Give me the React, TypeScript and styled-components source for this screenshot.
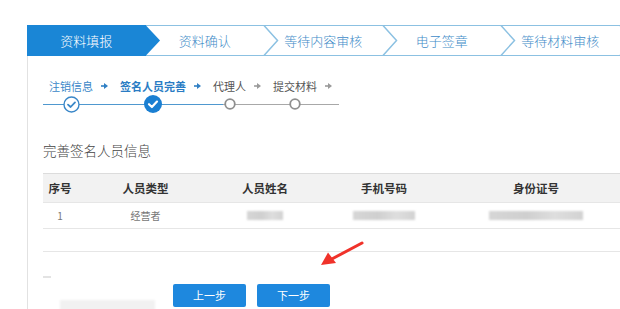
import React from "react";
import styled, { createGlobalStyle } from "styled-components";

const Global = createGlobalStyle`
  html, body { margin: 0; padding: 0; background: #fff; overflow: hidden; }
  body { font-family: "Microsoft YaHei", "Noto Sans CJK SC", "Noto Sans", sans-serif; }
  #root { width: 620px; height: 309px; position: relative; overflow: hidden; }
`;

const Page = styled.div`
  width: 620px;
  height: 309px;
  padding: 25px 0 0 27px;
  box-sizing: border-box;
  position: relative;
`;

const Panel = styled.div`
  border-left: 1px solid #e2e2e2;
  height: 100%;
  display: flex;
  flex-direction: column;
`;

const StepBar = styled.div`
  display: flex;
  height: 31px;
  margin-left: -1px;
`;

const Step = styled.div<{ $active?: boolean }>`
  position: relative;
  flex: 0 0 118.5px;
  height: 31px;
  box-sizing: border-box;
  display: flex;
  align-items: center;
  justify-content: center;
  font-size: 13px;
  font-weight: 300;
  color: ${(p) => (p.$active ? "#ffffff" : "#3f8cc8")};
  background: ${(p) => (p.$active ? "#1a86d6" : "#ffffff")};
  border-top: 1.5px solid ${(p) => (p.$active ? "#1a86d6" : "#8cc1e2")};
  border-bottom: 1.5px solid ${(p) => (p.$active ? "#1a86d6" : "#8cc1e2")};
`;

const ChevronSvg = styled.svg`
  position: absolute;
  left: 100%;
  top: -1.5px;
  width: 14px;
  height: 31px;
  z-index: 2;
  overflow: visible;
`;

const Content = styled.div`
  padding-left: 15px;
  display: flex;
  flex-direction: column;
`;

const SubSteps = styled.div`
  position: relative;
  display: flex;
  align-items: flex-start;
  margin-top: 23px;
  padding-left: 6px;
  &::before {
    content: "";
    position: absolute;
    left: 0;
    top: 24.5px;
    width: 296px;
    height: 1.5px;
    background: linear-gradient(to right, #4f98cf 0, #4f98cf 180px, #a8a8a8 180px, #a8a8a8 100%);
  }
`;

const SubStep = styled.div`
  display: flex;
  flex-direction: column;
  align-items: center;
  position: relative;
  z-index: 1;
`;

const SubLabel = styled.div<{ $tone: "done" | "current" | "todo" }>`
  font-size: 11px;
  line-height: 14px;
  height: 14px;
  white-space: nowrap;
  font-weight: ${(p) => (p.$tone === "current" ? 700 : 400)};
  color: ${(p) =>
    p.$tone === "done" ? "#3a87c8" : p.$tone === "current" ? "#2a7cc4" : "#555555"};
`;

const Node = styled.div`
  height: 18px;
  margin-top: 2px;
  display: flex;
  align-items: center;
  justify-content: center;
`;

const ArrowBox = styled.div`
  height: 14px;
  display: flex;
  align-items: center;
  margin: 0 12px 0 8px;
`;

const Title = styled.div`
  margin-top: 28px;
  font-size: 13.5px;
  font-weight: 300;
  line-height: 18px;
  color: #444;
`;

const Table = styled.div`
  margin-top: 14px;
  width: 577px;
  border-top: 1.5px solid #dcdcdc;
`;

const Row = styled.div<{ $head?: boolean; $h: number }>`
  display: grid;
  grid-template-columns: 34px 137px 102px 136px 168px;
  height: ${(p) => p.$h}px;
  align-items: center;
  background: ${(p) => (p.$head ? "#f2f2f2" : "#ffffff")};
  border-bottom: 1.5px solid #e6e6e6;
  box-sizing: border-box;
`;

const Cell = styled.div<{ $head?: boolean }>`
  text-align: center;
  font-size: ${(p) => (p.$head ? "11.5px" : "10px")};
  font-weight: ${(p) => (p.$head ? 700 : 400)};
  color: ${(p) => (p.$head ? "#333" : "#777")};
  display: flex;
  justify-content: center;
  white-space: nowrap;
`;

const Blur = styled.div<{ $w: number }>`
  width: ${(p) => p.$w}px;
  height: 9px;
  background: linear-gradient(to right, #d6d6d6, #cfcfcf 40%, #dedede 70%, #d2d2d2);
  filter: blur(0.8px);
`;

const Tick = styled.div`
  width: 8px;
  height: 1.5px;
  background: #e3e3e3;
  margin-top: 24px;
`;

const Buttons = styled.div`
  display: flex;
  gap: 11px;
  margin-top: 6px;
  margin-left: 130px;
`;

const Button = styled.button`
  width: 73px;
  height: 23px;
  border: none;
  border-radius: 2px;
  background: #1e88de;
  color: #fff;
  font-family: inherit;
  font-size: 11px;
  padding: 0;
  cursor: pointer;
`;

const FaintBlock = styled.div`
  position: absolute;
  left: 60px;
  top: 300px;
  width: 95px;
  height: 12px;
  background: #f1f1f1;
  filter: blur(1px);
`;

const RedArrow = styled.svg`
  position: absolute;
  left: 318px;
  top: 238px;
  width: 50px;
  height: 32px;
`;

const Chevron = ({ active }: { active?: boolean }) => (
  <ChevronSvg viewBox="0 0 14 31">
    {active ? (
      <polygon points="-0.5,0 14,15.5 -0.5,31" fill="#1a86d6" />
    ) : (
      <polyline points="0,0.5 13.5,15.5 0,30.5" fill="none" stroke="#8cc1e2" strokeWidth="1.5" />
    )}
  </ChevronSvg>
);

const SmallArrow = ({ color }: { color: string }) => (
  <svg width="7" height="6" viewBox="0 0 7 6">
    <line x1="0" y1="3" x2="4" y2="3" stroke={color} strokeWidth="1.6" />
    <polygon points="3,0 7,3 3,6" fill={color} />
  </svg>
);

const DoneCircle = () => (
  <svg width="17" height="17" viewBox="0 0 17 17">
    <circle cx="8.5" cy="8.5" r="7.5" fill="#fff" stroke="#3a87c8" strokeWidth="1.4" />
    <polyline points="5,8.6 7.6,11 12,6.4" fill="none" stroke="#3a87c8" strokeWidth="1.8" strokeLinecap="round" strokeLinejoin="round" />
  </svg>
);

const CurrentCircle = () => (
  <svg width="18" height="18" viewBox="0 0 18 18">
    <circle cx="9" cy="9" r="9" fill="#1a7fd2" />
    <polyline points="5,9.2 7.9,12 13,6.6" fill="none" stroke="#fff" strokeWidth="2.2" strokeLinecap="round" strokeLinejoin="round" />
  </svg>
);

const TodoCircle = () => (
  <svg width="12" height="12" viewBox="0 0 12 12">
    <circle cx="6" cy="6" r="4.8" fill="#fff" stroke="#8f8f8f" strokeWidth="1.8" />
  </svg>
);

const topSteps = ["资料填报", "资料确认", "等待内容审核", "电子签章", "等待材料审核"];

const subSteps: { label: string; tone: "done" | "current" | "todo" }[] = [
  { label: "注销信息", tone: "done" },
  { label: "签名人员完善", tone: "current" },
  { label: "代理人", tone: "todo" },
  { label: "提交材料", tone: "todo" },
];

const headers = ["序号", "人员类型", "人员姓名", "手机号码", "身份证号"];

export default function App() {
  return (
    <>
      <Global />
      <Page>
        <Panel>
          <StepBar>
            {topSteps.map((s, i) => (
              <Step key={s} $active={i === 0}>
                {s}
                <Chevron active={i === 0} />
              </Step>
            ))}
          </StepBar>
          <Content>
            <SubSteps>
              {subSteps.map((s) => (
                <React.Fragment key={s.label}>
                  <SubStep>
                    <SubLabel $tone={s.tone}>{s.label}</SubLabel>
                    <Node>
                      {s.tone === "done" ? <DoneCircle /> : s.tone === "current" ? <CurrentCircle /> : <TodoCircle />}
                    </Node>
                  </SubStep>
                  <ArrowBox>
                    <SmallArrow color={s.tone === "todo" ? "#9a9a9a" : "#2f7fc4"} />
                  </ArrowBox>
                </React.Fragment>
              ))}
            </SubSteps>
            <Title>完善签名人员信息</Title>
            <Table>
              <Row $head $h={29}>
                {headers.map((h) => (
                  <Cell $head key={h}>{h}</Cell>
                ))}
              </Row>
              <Row $h={26}>
                <Cell>1</Cell>
                <Cell>经营者</Cell>
                <Cell><Blur $w={36} /></Cell>
                <Cell><Blur $w={62} /></Cell>
                <Cell><Blur $w={94} /></Cell>
              </Row>
              <Row $h={23} />
            </Table>
            <Tick />
            <Buttons>
              <Button>上一步</Button>
              <Button>下一步</Button>
            </Buttons>
          </Content>
        </Panel>
        <FaintBlock />
        <RedArrow viewBox="0 0 50 32">
          <line x1="44" y1="5" x2="12" y2="22" stroke="#f0322a" strokeWidth="3" strokeLinecap="round" />
          <polygon points="3,27 10,14.5 18,25" fill="#f0322a" />
        </RedArrow>
      </Page>
    </>
  );
}
